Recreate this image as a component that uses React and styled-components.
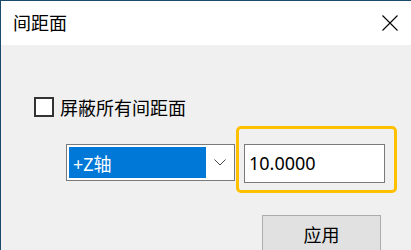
import styled, { createGlobalStyle } from "styled-components";

const GlobalStyle = createGlobalStyle`
    html, body {
        margin: 0;
        padding: 0;
        background: #f0f0f0;
    }
    body {
        font-family: "Noto Sans", "Noto Sans CJK SC", sans-serif;
        color: #000;
    }
`

const Window = styled.div`
    position: relative;
    width: 410px;
    height: 249px;
    border-top: 1px solid #1b4b68;
    border-left: 1px solid #1b4b68;
    background: #f0f0f0;
    overflow: hidden;
`

const TitleBar = styled.div`
    height: 44px;
    background: #fff;
    display: flex;
    align-items: center;
    justify-content: space-between;
    padding: 0 13px 0 12px;
`

const Title = styled.span`
    font-size: 18px;
    line-height: 1;
    margin-top: -1px;
`

const CloseButton = styled.button`
    border: none;
    background: none;
    padding: 0;
    width: 16px;
    height: 16px;
    display: flex;
    cursor: pointer;
`

const Body = styled.div`
    padding: 52px 0 0 33px;
`

const CheckRow = styled.label`
    display: flex;
    align-items: center;
    gap: 6px;
    font-size: 18px;
    height: 20px;
`

const Box = styled.span`
    box-sizing: border-box;
    width: 20px;
    height: 20px;
    border: 2px solid #333;
    background: #fff;
`

const FieldRow = styled.div`
    display: flex;
    align-items: flex-start;
    gap: 9px;
    margin: 27px 0 0 32px;
`

const Combo = styled.div`
    box-sizing: border-box;
    width: 169px;
    height: 37px;
    border: 1px solid #7a7a7a;
    background: #fff;
    padding: 2px;
    display: flex;
    align-items: center;
`

const Selected = styled.div`
    width: 137px;
    height: 31px;
    background: #0078d7;
    color: #fff;
    font-size: 18px;
    display: flex;
    align-items: center;
    padding-left: 4px;
    box-sizing: border-box;
`

const Chevron = styled.span`
    flex: 1;
    display: flex;
    justify-content: center;
    padding-left: 2px;
`

const Input = styled.div`
    box-sizing: border-box;
    width: 141px;
    height: 39px;
    border: 1px solid #7a7a7a;
    background: #fff;
    font-size: 18px;
    display: flex;
    align-items: center;
    padding: 0 0 1px 4px;
`

const Highlight = styled.div`
    position: absolute;
    left: 235px;
    top: 125px;
    width: 161px;
    height: 67px;
    box-sizing: border-box;
    border: 3px solid #ffc000;
    border-radius: 5px;
`

const ButtonRow = styled.div`
    display: flex;
    margin: 32px 0 0 228px;
`

const ApplyButton = styled.button`
    box-sizing: border-box;
    width: 119px;
    height: 40px;
    border: 1px solid #adadad;
    background: #e1e1e1;
    font-family: "Noto Sans CJK SC", sans-serif;
    font-size: 18px;
    line-height: 1.2;
    color: #000;
    display: flex;
    justify-content: center;
    padding-top: 8px;
`

export default function App() {
    return (
        <>
            <GlobalStyle />
            <Window>
                <TitleBar>
                    <Title>间距面</Title>
                    <CloseButton aria-label="关闭">
                        <svg width="16" height="16" viewBox="0 0 16 16">
                            <path d="M0.5 0.5 L15.5 15.5 M15.5 0.5 L0.5 15.5" stroke="#000" strokeWidth="1.1" fill="none" />
                        </svg>
                    </CloseButton>
                </TitleBar>
                <Body>
                    <CheckRow>
                        <Box />
                        屏蔽所有间距面
                    </CheckRow>
                    <FieldRow>
                        <Combo>
                            <Selected>+Z轴</Selected>
                            <Chevron>
                                <svg width="12" height="7" viewBox="0 0 12 7">
                                    <path d="M0.5 0.5 L6 6 L11.5 0.5" stroke="#444" strokeWidth="1" fill="none" />
                                </svg>
                            </Chevron>
                        </Combo>
                        <Input>10.0000</Input>
                    </FieldRow>
                    <ButtonRow>
                        <ApplyButton>应用</ApplyButton>
                    </ButtonRow>
                </Body>
                <Highlight />
            </Window>
        </>
    )
}
